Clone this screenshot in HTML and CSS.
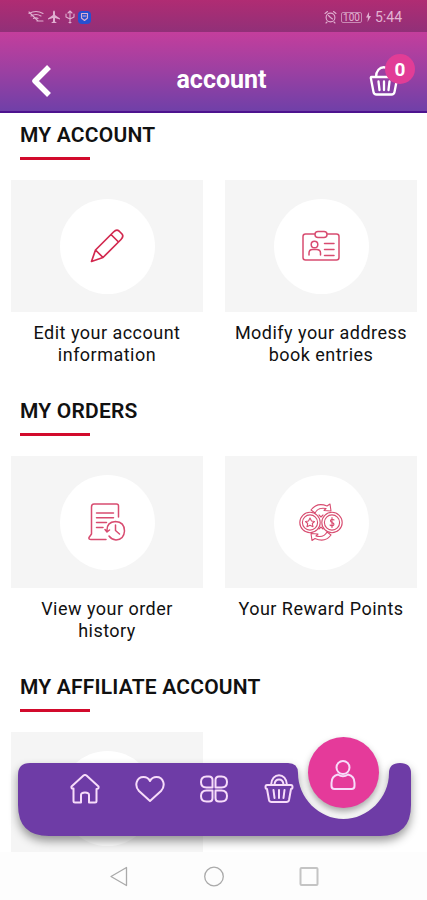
FILE: index.html
```html
<!DOCTYPE html>
<html lang="en">
<head>
    <meta charset="UTF-8">
    <meta name="viewport" content="width=device-width, initial-scale=1.0">
    <title>account</title>
    <link rel="stylesheet" href="styles.css">
</head>
<body>

<div class="app">
    <!-- Status bar -->
    <div class="status-bar">
        <div class="status-left">
            <svg width="16" height="14" viewBox="0 0 16 14"><path d="M1 3.5Q8-.5 15 3.5M3 6Q8 3 13 6M5.5 8.5Q8 7 10 8.5M1 2L10 11M9 11H15"/></svg>
            <svg width="14" height="14" viewBox="0 0 14 14"><path class="solid" d="M7 .5Q8 .5 8 2.5V5L13 8.5V9.5L8 8V11.5L10 13H4L6 11.5V8L1 9.5V8.5L6 5V2.5Q6 .5 7 .5Z"/></svg>
            <svg width="12" height="14" viewBox="0 0 12 14"><path d="M6 1V13M4 3L6 1L8 3M2 4V7L6 9L10 7V4M5 12.5H7"/></svg>
            <span class="status-app">
                <svg width="9" height="10" viewBox="0 0 9 10"><path d="M1.500 1.500H7.500V6L4.500 8.500L1.500 6ZM3 4H6"/></svg>
            </span>
        </div>
        <div class="status-right">
            <svg width="13" height="14" viewBox="0 0 13 14"><circle cx="6.5" cy="7.5" r="4.4"/><path d="M1 3.5L3.5 1.5M9.500 1.500L12 3.5M4.500 5.500L6.500 7.500L8.500 9M3 12L2 13M10 12L11 13"/></svg>
            <span class="battery">100</span>
            <svg class="bolt" width="5" height="10" viewBox="0 0 5 10"><path class="solid" d="M3 0L0 5.500H2L1.500 10L5 4H3Z"/></svg>
            <span class="clock">5:44</span>
        </div>
    </div>

    <!-- Header -->
    <header class="header">
        <svg class="back" width="22" height="34" viewBox="0 0 22 34"><path d="M19 3L5 17L19 31"/></svg>
        <h1>account</h1>
        <div class="cart">
            <svg width="29" height="32" viewBox="0 0 29 32"><path d="M2.500 12H27.500Q28.500 12 28 14L25.500 27Q25 29.500 22.500 29.500H7.500Q5 29.500 4.500 27L2 14Q1.500 12 2.500 12ZM7 12C7-1 22.500-1 22.500 12M9.500 16.500L10.500 25M15 16.500V25M20.500 16.500L19.500 25"/></svg>
            <span class="badge">0</span>
        </div>
    </header>

    <main class="content">
        <section class="section">
            <h2>MY ACCOUNT</h2>
            <div class="grid">
                <div class="item">
                    <div class="box"><div class="circle">
                        <svg class="pencil" width="36" height="36" viewBox="0 0 36 36"><path d="M2.500 33.500L6.500 22L24.500 4Q27.500 1 30 3L33 6Q35 8.500 32 11.500L14 29.500ZM6.500 22L14 29.500L2.500 33.500M22 6.500L29.500 14"/></svg>
                    </div></div>
                    <p>Edit your account information</p>
                </div>
                <div class="item">
                    <div class="box"><div class="circle">
                        <svg width="38" height="34" viewBox="0 0 38 34"><path d="M13 5H3.500Q1 5 1 7.500V28.500Q1 31 3.500 31H34.500Q37 31 37 28.500V7.500Q37 5 34.500 5H25M16 2.500H22Q25 2.500 25 5.500Q25 8.500 22 8.500H16Q13 8.500 13 5.500Q13 2.500 16 2.500ZM7 26V24Q7 20.500 10.500 20.500H14.500Q18.500 20.500 18.500 24V26M22.500 14.500H32M22.500 20.500H32M22.500 26.500H32"/><circle cx="12.500" cy="15.500" r="3.300"/></svg>
                    </div></div>
                    <p>Modify your address book entries</p>
                </div>
            </div>
        </section>

        <section class="section">
            <h2>MY ORDERS</h2>
            <div class="grid">
                <div class="item">
                    <div class="box"><div class="circle">
                        <svg width="38" height="38" viewBox="0 0 38 38"><path d="M30.500 14V3Q30.500 1 28.500 1H6Q3.500 1 3.500 4V31L1 34.500Q.5 36.500 3 36.500H18M8.500 10H25.500M8.500 14.800H25.500M8.500 19.500H18.500M8.500 24.500H15M19 28Q18.500 19 27.500 18.500Q36.500 19 36.500 28Q36 36.500 28 37Q23.500 36.500 21 33M17 26.500L19 29L21.500 27M27.500 22V27.500L31.500 31"/></svg>
                    </div></div>
                    <p>View your order history</p>
                </div>
                <div class="item">
                    <div class="box"><div class="circle">
                        <svg class="thin" width="44" height="38" viewBox="0 0 44 38"><circle cx="11" cy="19.500" r="10.200"/><circle cx="11" cy="19.500" r="7.600"/><circle cx="33" cy="19.500" r="10.200"/><circle cx="33" cy="19.500" r="7.600"/><path d="M11 15L12.500 18L15.500 18.500L13.300 20.500L14 23.700L11 22.200L8 23.700L8.700 20.500L6.500 18.500L9.500 18ZM35 17Q33 15.500 31.700 17Q31 18.500 33 19.500Q35.500 20.500 34.700 22Q33 23.500 31 22M33 14.500V24.500M12 7Q18-1 28 3L31 1L32 8L25 7.500L27 5.500Q19 4 16 10ZM32 32Q26 40 16 35.500L13 37.500L12 30.500L19 31L17 33Q25 35 28 29ZM20 12L22 14L24 12M20 26L22 24L24 26"/></svg>
                    </div></div>
                    <p>Your Reward Points</p>
                </div>
            </div>
        </section>

        <section class="section">
            <h2>MY AFFILIATE ACCOUNT</h2>
            <div class="grid">
                <div class="item">
                    <div class="box"><div class="circle"></div></div>
                </div>
            </div>
        </section>

        <!-- Floating tab bar -->
        <nav class="tab-bar">
            <svg class="tab-shape" width="393" height="73" viewBox="0 0 393 73"><path d="M12 0H270Q280 0 280 10C280 35 301 56 325.500 56S371 35 371 10Q371 0 382 0T393 10V42Q393 73 362 73H31Q0 73 0 42V12Q0 0 12 0Z"/></svg>
            <div class="tabs">
                <svg width="30" height="30" viewBox="0 0 30 30"><path d="M3.500 17V14.500Q1 15 1.500 12.500L13.500 1.500Q15 .5 16.500 1.500L28.500 12.500Q29 15 26.500 15V27Q26.500 28.500 25 28.500H19V21Q19 18.500 15 18.500T11 21V28.500H5Q3.500 28.500 3.500 27Z"/></svg>
                <svg width="30" height="30" viewBox="0 0 30 30"><path d="M15 27L4 17C-1 11.500 1.500 3 8.500 3Q13 3 15 7Q17 3 21.500 3C28.500 3 31 11.500 26 17Z"/></svg>
                <svg width="30" height="30" viewBox="0 0 30 30"><path d="M7.500 2.500H10Q13.500 2.500 13.500 6V13.500H7.500Q2 13.500 2 8T7.500 2.500ZM22.500 2.500H20Q16.500 2.500 16.500 6V13.500H22.500Q28 13.500 28 8T22.500 2.500ZM7.500 27.500H10Q13.500 27.500 13.500 24V16.500H7.500Q2 16.500 2 22T7.500 27.500ZM22.500 27.500H20Q16.500 27.500 16.500 24V16.500H22.500Q28 16.500 28 22T22.500 27.500Z"/></svg>
                <svg width="30" height="30" viewBox="0 0 30 30"><path d="M3 11H27Q28.500 11 28.500 13T27 15L25 26Q24.500 28 22.500 28H7.500Q5.500 28 5 26L3 15Q1.500 15 1.500 13T3 11ZM7 11C7.500 -2 22.500 -2 23 11M10.500 10.500Q11 5.500 15 5.500T19.500 10.500M9.500 16L10.500 24M15 16V24M20.500 16L19.500 24"/></svg>
            </div>
            <div class="tab-active">
                <svg width="28" height="32" viewBox="0 0 28 32"><circle cx="14" cy="8.500" r="6.500"/><path d="M9 15.500Q2.500 17 2.500 24V27Q2.500 30 5.500 30H22.500Q25.500 30 25.500 27V24Q25.500 17 19 15.500Q14 19 9 15.500Z"/></svg>
            </div>
        </nav>
    </main>

    <!-- Android navigation -->
    <div class="system-nav">
        <svg width="22" height="22" viewBox="0 0 22 22"><path d="M18.500 2.500V20.500L3 11.500Z"/></svg>
        <svg width="22" height="22" viewBox="0 0 22 22"><circle cx="11" cy="11.500" r="9.300"/></svg>
        <svg class="square" width="22" height="22" viewBox="0 0 22 22"><rect x="2.500" y="3" width="17" height="17" rx="1"/></svg>
    </div>
</div>

</body>
</html>
```

FILE: styles.css
```css
body {
    font-family: Roboto, Arial, sans-serif;
    background-color: #fff;
    color: #111;
    margin: 0;
}
svg {
    display: block;
    fill: none;
    stroke-linecap: round;
    stroke-linejoin: round;
}
.app {
    height: 900px;
    display: flex;
    flex-direction: column;
    overflow: hidden;
}
.status-bar {
    height: 32px;
    flex: none;
    box-sizing: border-box;
    padding: 2px 25px 0 28px;
    display: flex;
    align-items: center;
    justify-content: space-between;
    background: linear-gradient(#b02c73, #913078);
    color: #e3b4d2;
}
.status-bar svg {
    stroke: #dfafd0;
    stroke-width: 1.1;
}
.status-bar .solid {
    fill: #dfafd0;
    stroke: none;
}
.status-left, .status-right {
    display: flex;
    align-items: center;
}
.status-left {
    gap: 3px;
}
.status-left svg {
    flex: none;
}
.status-app {
    width: 13px;
    height: 13px;
    margin-left: -1px;
    border-radius: 4px;
    background-color: #2750d0;
    display: flex;
    align-items: center;
    justify-content: center;
}
.battery {
    box-sizing: border-box;
    width: 21px;
    height: 11px;
    margin-left: 4px;
    border: 1px solid #c98bb5;
    border-radius: 2px;
    font-size: 10px;
    line-height: 10px;
    text-align: center;
}
.bolt {
    margin-left: 4px;
}
.clock {
    margin-left: 4px;
    font-size: 14px;
    line-height: 16px;
}
.header {
    height: 81px;
    flex: none;
    box-sizing: border-box;
    padding: 15px 28px 0 30px;
    border-bottom: 2px solid #4d138f;
    display: grid;
    grid-template-columns: 40px 1fr 30px;
    background: linear-gradient(#c43e9c, #9b40a2 50%, #7040a8);
}
.back {
    stroke: #fff;
    stroke-width: 5.5;
    stroke-linecap: butt;
    margin-top: 17px;
}
.header h1 {
    margin: 19px 0 0 4px;
    color: #fff;
    font-size: 25px;
    line-height: 28px;
    font-weight: 700;
    text-align: center;
}
.cart {
    position: relative;
}
.cart svg {
    stroke: #fff;
    stroke-width: 2.3;
    margin-top: 18px;
}
.badge {
    position: absolute;
    left: 16px;
    top: 7px;
    width: 30px;
    height: 30px;
    border-radius: 50%;
    background-color: #e13d96;
    color: #fff;
    font-size: 19px;
    line-height: 31px;
    font-weight: 700;
    text-align: center;
}
.content {
    position: relative;
    flex: 1;
    min-height: 0;
}
.section {
    height: 276px;
}
.section h2 {
    margin: 0 20px;
    padding-top: 9px;
    font-size: 21px;
    line-height: 27px;
    font-weight: 600;
    letter-spacing: 0.2px;
    white-space: nowrap;
}
.section h2::after {
    content: "";
    display: block;
    width: 70px;
    height: 3px;
    margin-top: 8px;
    background-color: #d20a2c;
}
.grid {
    display: grid;
    grid-template-columns: 192px 192px;
    gap: 22px;
    padding: 20px 10px 0 11px;
}
.box {
    height: 132px;
    background-color: #f5f5f5;
    display: flex;
    align-items: center;
    justify-content: center;
}
.circle {
    width: 95px;
    height: 95px;
    border-radius: 50%;
    background-color: #fff;
    display: flex;
    align-items: center;
    justify-content: center;
}
.circle svg {
    stroke: #d84c70;
    stroke-width: 1.5;
}
.circle .pencil {
    stroke: #d2294f;
    stroke-width: 1.7;
}
.circle .thin {
    stroke-width: 1.1;
}
.item p {
    margin: 10px 6px 0;
    font-size: 18px;
    line-height: 22px;
    letter-spacing: 0.48px;
    text-align: center;
}
/* Tab bar over the page content */
.tab-bar {
    position: absolute;
    left: 18px;
    top: 650px;
    width: 393px;
    height: 73px;
}
.tab-shape {
    position: absolute;
    overflow: visible;
    fill: #6e3ca6;
    filter: drop-shadow(0 5px 5px rgba(0, 0, 0, 0.4));
}
.tabs {
    position: relative;
    display: flex;
    gap: 34.5px;
    padding: 11px 0 0 52px;
}
.tabs svg, .tab-active svg {
    stroke: #f7dcfa;
    stroke-width: 2;
}
.tab-active {
    position: absolute;
    left: 290px;
    top: -26px;
    width: 71px;
    height: 71px;
    border-radius: 50%;
    background-color: #e53a9a;
    box-shadow: 0 4px 7px rgba(0, 0, 0, 0.35);
    display: flex;
    align-items: center;
    justify-content: center;
}
.tab-active svg {
    margin: 5px 1px 0 0;
}
.system-nav {
    position: relative;
    height: 48px;
    flex: none;
    display: flex;
    align-items: center;
    justify-content: center;
    gap: 73px;
    background-color: #fdfdfd;
}
.system-nav svg {
    stroke: #aaa;
    stroke-width: 1.3;
}
.system-nav .square {
    stroke: #c4c4c4;
    stroke-width: 2;
}
```
